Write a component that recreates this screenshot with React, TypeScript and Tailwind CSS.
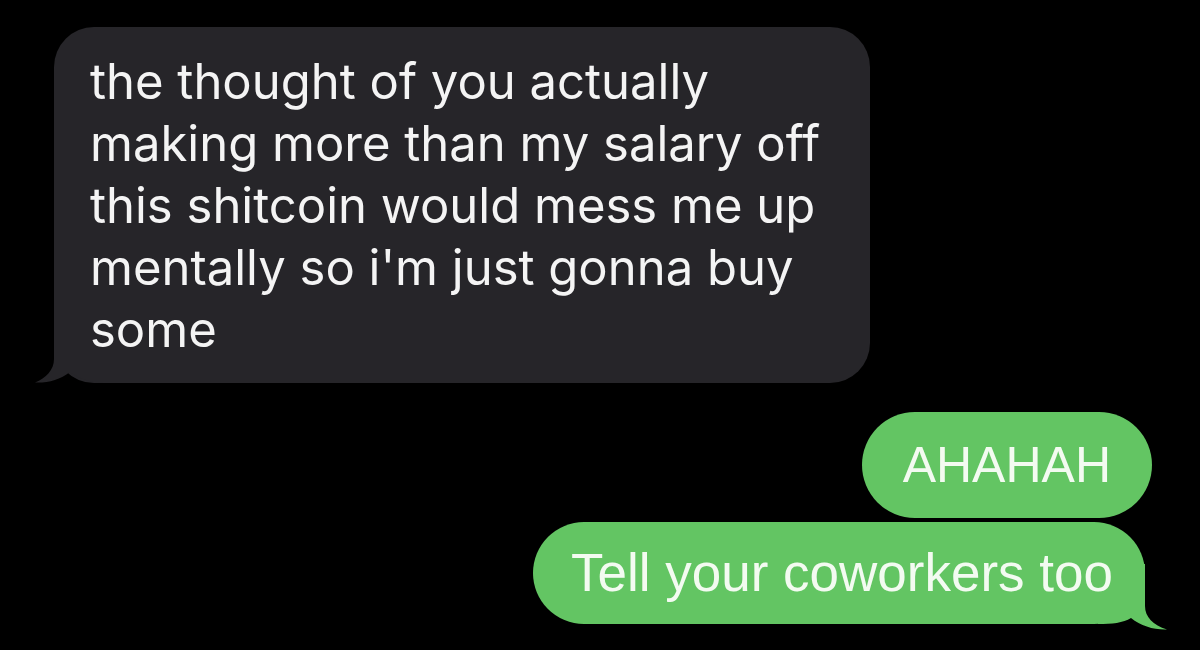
import React from 'react';

const grayLines = [
  'the thought of you actually',
  'making more than my salary off',
  'this shitcoin would mess me up',
  "mentally so i'm just gonna buy",
  'some',
];

const IncomingTail = () => (
  <svg
    className="absolute left-[-20px] bottom-0"
    width="70"
    height="61"
    viewBox="0 0 70 61"
  >
    <path d="M20 0 L20 37 C20 48 12 56 1 60.5 C14 61 26 58 36 50 C44 56 56 61 70 61 L70 0 Z" fill="#262529" />
  </svg>
);

const OutgoingTail = () => (
  <svg
    className="absolute right-[-23px] bottom-[-6px] -scale-x-100"
    width="70"
    height="66"
    viewBox="0 0 70 66"
  >
    <path d="M23 0 L23 42 C23 53 15 61 1 65.5 C14 66 27 62 37 54 C45 59 56 60 70 60 L70 0 Z" fill="#63c563" />
  </svg>
);

export default function App() {
  return (
    <div className="w-[1200px] h-[650px] bg-black overflow-hidden flex flex-col">
      {/* received message */}
      <div className="pt-[27px] pl-[54px]">
        <div className="relative w-[816px] h-[356px] rounded-[40px] bg-[#262529] pl-[36px] pt-[24px]">
          <IncomingTail />
          <div
            className="relative text-[49px] leading-[62px] text-[#f4f4f4]"
            style={{ fontFamily: 'Inter, "Noto Sans", sans-serif' }}
          >
            {grayLines.map((line) => (
              <div key={line}>{line}</div>
            ))}
          </div>
        </div>
      </div>

      {/* sent messages */}
      <div
        className="mt-[29px] pr-[48px] flex flex-col items-end gap-[4px] text-[#f3fbf1]"
        style={{ fontFamily: '"Liberation Sans", Arial, sans-serif' }}
      >
        <div className="h-[106px] px-[41px] rounded-full bg-[#63c563] flex items-center text-[50px]">
          AHAHAH
        </div>
        <div className="relative mr-[7px] h-[102px] pl-[38px] pr-[32px] rounded-full bg-[#63c563] flex items-center text-[53px]">
          <OutgoingTail />
          <span className="relative">Tell your coworkers too</span>
        </div>
      </div>
    </div>
  );
}
